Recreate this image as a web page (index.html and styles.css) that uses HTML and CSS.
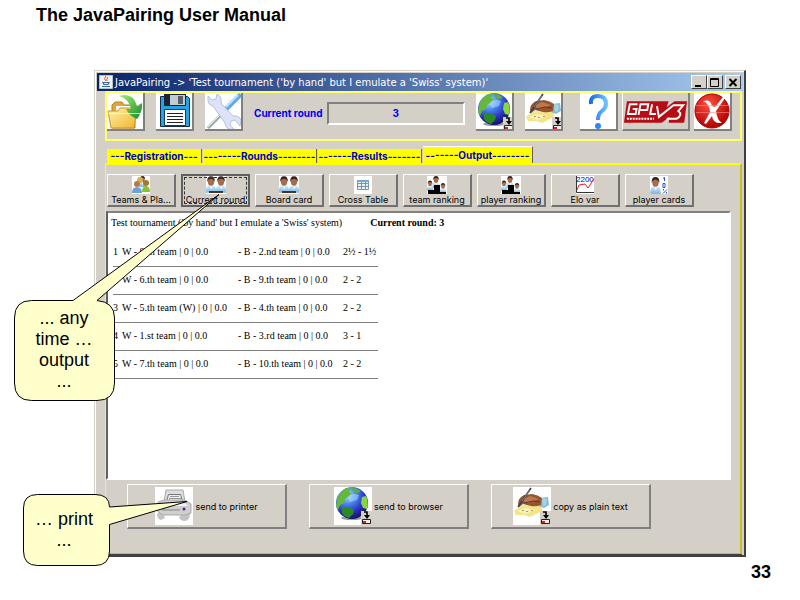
FILE: index.html
```html
<!DOCTYPE html>
<html lang="en">
<head>
<meta charset="utf-8">
<title>The JavaPairing User Manual</title>
<link rel="stylesheet" href="styles.css">
</head>
<body>
<svg class="sprite" aria-hidden="true">
  <defs>
    <radialGradient id="sea" cx=".35" cy=".25" r=".8"><stop offset="0" stop-color="#b8e4ff"/><stop offset=".35" stop-color="#4a86ec"/><stop offset=".7" stop-color="#2a2fc0"/><stop offset="1" stop-color="#101050"/></radialGradient>
    <linearGradient id="folder" x2="1" y2="1"><stop offset="0" stop-color="#fff3b0"/><stop offset="1" stop-color="#efb52a"/></linearGradient>
    <linearGradient id="leaf" x2="1" y2="1"><stop offset="0" stop-color="#a4f070"/><stop offset="1" stop-color="#138a2c"/></linearGradient>
    <linearGradient id="query" x2="1"><stop offset="0" stop-color="#1c6cf0"/><stop offset="1" stop-color="#6cc0ff"/></linearGradient>
    <radialGradient id="stop" cx=".4" cy=".3" r=".7"><stop offset="0" stop-color="#ff5040"/><stop offset="1" stop-color="#b00000"/></radialGradient>
    <linearGradient id="shirt" x2="0" y2="1"><stop offset="0" stop-color="#d4eefc"/><stop offset="1" stop-color="#78b4e4"/></linearGradient>
  </defs>
  <symbol id="i-drive" viewBox="0 0 11 14">
    <path fill="#d4d0c8" d="M0 0h11v14H0z"/><path fill="none" stroke="#000" stroke-width="1.6" d="M3 1h3v5"/><path d="M3 4h6L6 8z"/><path fill="#eee" stroke="#222" d="M1.500 8.500h8v4h-8z"/><path fill="#e02020" d="M2 10h3v2H2z"/>
  </symbol>
  <symbol id="i-globe" viewBox="0 0 38 38">
    <path fill="#fff" d="M0 0h38v38H0z"/><ellipse cx="18" cy="31" rx="11" ry="2" fill="#9a9aa8"/><circle cx="18" cy="16" r="16" fill="url(#sea)"/>
    <path fill="#66b838" d="M3 13Q5 5 12 1l5 1-2 3 3 1-3 4-4 2-1 4-4 2-2 5-2-4z"/><path fill="#2c8a24" d="M8 21l6-1 6 3-1 4-4 4q-5-1-7-5z"/><path fill="#88d83c" d="M28 10l4-1q3 6 1 13l-4-1-2-5z"/><path fill="#5fae3c" d="M18 1q6 0 9 4l-5 1-3-2z"/><path fill="#a8dcff" opacity=".55" d="M13 10q5-5 12-2l-2 5-7 2z"/>
    <use href="#i-drive" x="27" y="24" width="11" height="14"/>
  </symbol>
  <symbol id="i-hand" viewBox="0 0 38 38">
    <path fill="#fff" d="M0 0h38v38H0z"/><path fill="#f4e488" d="M1 24l8-6 20 1 0 5-12 6-6-2-8 0z"/><path fill="#faf2c0" d="M4 24l8-3 10 2-9 4z"/><path fill="#85bdd4" d="M27 11l8-1 1 8-5 3-5-2z"/><path fill="#a4d4e4" d="M29 11l5 1-1 6-3 1z"/>
    <path fill="#955530" d="M5 17q0-6 6-9l8-1q6 1 10 4l-1 7q-5 2-10 1l-8-2-4 3z"/><path fill="#bd784c" d="M10 12l7-3 9 3-8 3-6 1z"/><path stroke="#653520" fill="none" d="M11 16l9-2 7 1"/><path stroke="#34424c" stroke-width="1.600" d="M5 20L18 1"/><path stroke="#86a2b0" stroke-width=".7" d="M9 14l8-11"/><path fill="#b0985c" d="M13 24h2v1h-2zM18 23h2v1h-2zM9 23h2v1H9z"/>
    <use href="#i-drive" x="27" y="24" width="11" height="14"/>
  </symbol>
  <symbol id="i-man" viewBox="0 0 12 20">
    <path fill="url(#shirt)" d="M0 20q-1-8 4-9h4q5 1 4 9z"/><ellipse cx="6" cy="6.500" rx="3.800" ry="5" fill="#a86c4a"/><path fill="#33241c" d="M1.500 7Q1 0 6 0t4.500 7L9 4 6 3 3 4z"/><path fill="#fff" d="M5 12l1 4 2-4z"/>
  </symbol>
  <symbol id="i-duel" viewBox="0 0 22 18">
    <path fill="#fff" d="M1 0h20v18H1z"/><use href="#i-man" x="1" y="0" width="10" height="17"/><use href="#i-man" x="11" y="0" width="10" height="17"/><path fill="#4a3428" d="M4 15h14v2H4z"/>
  </symbol>
  <symbol id="i-podium" viewBox="0 0 20 18">
    <path fill="#fff" d="M0 0h20v18H0z"/><use href="#i-man" x="5" y="0" width="8" height="12"/><use href="#i-man" x="0" y="4" width="6" height="11"/><use href="#i-man" x="13" y="7" width="6" height="10"/><path d="M7 9h6v9H1v-4h6zM13 16h6v2h-6z"/>
  </symbol>
</svg>

<header class="heading"><h1>The JavaPairing User Manual</h1></header>

<main class="window">
  <div class="titlebar">
    <svg class="cup" viewBox="0 0 14 14" aria-hidden="true"><path fill="#eef2f6" stroke="#b8c0c8" d="M.5.5h13v13H.5z"/><path fill="none" stroke="#e06018" d="M7 1q-3 3 0 5M9 2q-2 2-1 4"/><path fill="none" stroke="#386898" stroke-width="1.200" d="M4 7.500h6l-1 2H5zM3 11.500h8"/></svg>
    <span class="caption">JavaPairing -&gt; 'Test tournament ('by hand' but I emulate a 'Swiss' system)'</span>
    <div class="controls">
      <button aria-label="Minimize"><svg viewBox="0 0 12 11"><path d="M2 8h6v2H2z"/></svg></button>
      <button aria-label="Maximize"><svg viewBox="0 0 12 11"><path fill="none" stroke="#000" d="M1.500 1.500h8v8h-8zM1 2.500h9"/></svg></button>
      <button aria-label="Close"><svg viewBox="0 0 12 11"><path stroke="#000" stroke-width="2" d="M2.500 2l7 7M9.500 2l-7 7"/></svg></button>
    </div>
  </div>

  <div class="toolbar">
    <div class="group">
      <button class="tool" aria-label="Open"><svg viewBox="0 0 38 38"><path fill="#fff" d="M0 0h38v38H0z"/><path fill="#dca83c" stroke="#b88020" d="M5 12l3-3h7l2 3h11v23H5z"/><path fill="#fff" d="M9 13h17v7H9z"/><path fill="url(#folder)" stroke="#cc9428" d="M1 18h10l2-3h17l-3 20H4z"/><path fill="url(#leaf)" d="M12 3q14-4 18 10l5-3q1 8-5 16-8-3-11-10l5 0Q22 6 12 3z"/><path stroke="#fff" opacity=".7" d="M0 20.500h36"/></svg></button>
      <button class="tool" aria-label="Save"><svg viewBox="0 0 38 38"><path fill="#fff" d="M0 0h38v38H0z"/><path fill="#22a4e4" stroke="#102c48" d="M4.500 3.500h27l2 2v28h-29z"/><path fill="#1c2430" d="M8 1h22v12H8z"/><path fill="#c4ccd0" d="M14 2h15v10H14z"/><path fill="#555f68" d="M22 3h5v8h-5z"/><path fill="#fff" stroke="#203850" d="M8.500 16.500h21v16h-21z"/><path stroke="#222" d="M11 20.500h16M11 23.500h16M11 26.500h16M11 29.500h16"/></svg></button>
      <button class="tool" aria-label="Settings"><svg viewBox="0 0 38 38"><path fill="#fff" d="M0 0h38v38H0z"/><path stroke="#9ba8b0" stroke-width="3" d="M3 35l20-20"/><path stroke="#e4f0f8" d="M3 34l20-20"/><path stroke="#62a8e8" stroke-width="5" stroke-linecap="round" d="M22 15L34 3"/><path stroke="#bfe2ff" stroke-width="2" d="M21 14L33 2"/><path fill="#dde2f8" stroke="#a4b8d4" stroke-width=".8" d="M3 3l4 4 4-1 1-5q5 2 4 9l12 13q7-1 8 5l-1 5-5-6-4 1-1 4 4 4q-8 2-9-6L8 13Q2 12 3 3z"/></svg></button>
    </div>
    <div class="round">
      <label for="round">Current round</label>
      <input id="round" type="text" value="3" readonly>
    </div>
    <div class="group">
      <button class="tool" aria-label="Browser"><svg><use href="#i-globe"/></svg></button>
      <button class="tool" aria-label="Copy"><svg><use href="#i-hand"/></svg></button>
    </div>
    <div class="group about">
      <button class="tool" aria-label="Help"><svg viewBox="0 0 38 38"><path fill="#fff" d="M0 0h38v38H0z"/><path fill="none" stroke="url(#query)" stroke-width="4" d="M11 11Q10 3 18 3q8 0 8 8 0 4-4 7-4 3-4 9"/><circle cx="18" cy="33" r="3" fill="#2a88ee"/></svg></button>
      <button class="tool wide" aria-label="License"><svg viewBox="0 0 68 38"><path fill="#b80c14" d="M4 8h43l-2 6 8-6h13l-3 22H47l1-6-8 6H1z"/><path fill="none" stroke="#fff" stroke-width="2" d="M15 11H7L5 21h8l1-5h-4M16 22l2-11h8l-1 6h-7M30 11l-2 10h6"/><path fill="none" stroke="#fff" stroke-width="2" d="M35 13l2 11 15-12h10l-5 6q5 4-2 8H45"/><path stroke="#fff" stroke-width="2" stroke-dasharray="2 1" d="M4 26h28"/></svg></button>
      <button class="tool" aria-label="Exit"><svg viewBox="0 0 38 38"><path fill="#fff" d="M0 0h38v38H0z"/><circle cx="18" cy="18" r="17" fill="url(#stop)" stroke="#a00"/><path fill="#fff" d="M10 8q6-2 8 5l3 1 8-10 2 1-9 13q1 9 6 12-9 1-10-7l-6 8-2-1 6-11q0-8-7-11z"/><path stroke="#f88" opacity=".6" d="M2 12.500h34M2 19.500h34"/></svg></button>
    </div>
  </div>

  <nav class="tabs" role="tablist">
    <button role="tab">---Registration---</button>
    <button role="tab">--------Rounds--------</button>
    <button role="tab">-------Results-------</button>
    <button role="tab" aria-selected="true" class="current">-------Output--------</button>
  </nav>

  <section class="panel">
    <div class="views">
      <button><svg viewBox="0 0 22 18"><path fill="#fff" d="M2 0h18v18H2z"/><use href="#i-man" x="9" y="0" width="7" height="11"/><circle cx="10" cy="4" r="3" fill="#dcb050"/><circle cx="16" cy="7" r="3" fill="#a47830"/><path fill="#8cc030" d="M12 16q0-6 4-6t4 6z"/><circle cx="7" cy="8" r="3" fill="#b87848"/><path fill="#68a4dc" d="M2 17q0-6 5-6t5 6z"/></svg>Teams &amp; Pla...</button>
      <button class="focused"><svg viewBox="0 0 22 18"><use href="#i-duel"/></svg>Current round</button>
      <button><svg viewBox="0 0 22 18"><use href="#i-duel"/></svg>Board card</button>
      <button><svg viewBox="0 0 22 18"><path fill="#fff" d="M2 0h18v18H2z"/><path fill="#e4f4f4" stroke="#8094a8" d="M5.500 4.500h11v9h-11zM5 7.500h12M5 10.500h12M9.500 4v10M13.500 4v10"/><path fill="#70a8d8" d="M5 4h12v2H5z"/></svg>Cross Table</button>
      <button><svg viewBox="0 0 20 18"><use href="#i-podium"/></svg>team ranking</button>
      <button><svg viewBox="0 0 20 18"><use href="#i-podium"/></svg>player ranking</button>
      <button><svg viewBox="0 0 22 18"><path fill="#fff" d="M2 0h18v18H2z"/><path fill="none" stroke="#333" d="M2.500 0v16.500H20"/><text class="elo" x="2" y="6">2200</text><path fill="none" stroke="#e02030" d="M3 14l2-5 6-1 3 4 6-9"/></svg>Elo var</button>
      <button><svg viewBox="0 0 22 18"><path fill="#fff" d="M2 0h18v18H2z"/><use href="#i-man" x="2" y="1" width="11" height="17"/><path fill="none" stroke="#2058d8" d="M15 2.500l1.500-1V5M15 7.500h2v4h-2zM15 17.500l4-4M15.500 13v1.500M18.500 16v1.500"/></svg>player cards</button>
    </div>

    <div class="sheet">
      <p>Test tournament ('by hand' but I emulate a 'Swiss' system)<b>Current round: 3</b></p>
      <table>
        <colgroup><col class="c-no"><col class="c-white"><col class="c-black"><col class="c-score"></colgroup>
        <tbody>
          <tr><td>1</td><td>W - 8.th team | 0 | 0.0</td><td>- B - 2.nd team | 0 | 0.0</td><td>2½ - 1½</td></tr>
          <tr><td>2</td><td>W - 6.th team | 0 | 0.0</td><td>- B - 9.th team | 0 | 0.0</td><td>2 - 2</td></tr>
          <tr><td>3</td><td>W - 5.th team (W) | 0 | 0.0</td><td>- B - 4.th team | 0 | 0.0</td><td>2 - 2</td></tr>
          <tr><td>4</td><td>W - 1.st team | 0 | 0.0</td><td>- B - 3.rd team | 0 | 0.0</td><td>3 - 1</td></tr>
          <tr><td>5</td><td>W - 7.th team | 0 | 0.0</td><td>- B - 10.th team | 0 | 0.0</td><td>2 - 2</td></tr>
        </tbody>
      </table>
    </div>

    <div class="actions">
      <button><svg viewBox="0 0 38 38"><path fill="#fff" d="M0 0h38v38H0z"/><path fill="#c4c4c4" d="M2 27l5-3 3 7-4 2q-4-1-4-6zM24 30l6-5 5 2q0 6-5 7-5 0-6-4z"/><path fill="#ddd" stroke="#aaa" d="M11 3h17l2 12H9z"/><path fill="#eee" stroke="#777" d="M13.500 7.500h12l2 7h-16z"/><path stroke="#999" d="M15 9.500h9M14 11.500h12"/><path fill="#d0d0d0" stroke="#aaa" d="M3 15l6-2h21l6 4v9l-6 2H8l-5-3z"/><path fill="#f2f2f2" d="M6 16h24l3 3H5z"/><path fill="#aaa" d="M7 22h18v2H7z"/><circle cx="29" cy="22" r="1.500" fill="#528"/></svg>send to printer</button>
      <button><svg viewBox="0 0 38 38"><use href="#i-globe"/></svg>send to browser</button>
      <button><svg viewBox="0 0 38 38"><use href="#i-hand"/></svg>copy as plain text</button>
    </div>
  </section>
</main>

<footer class="page-number">33</footer>

<aside class="callout any">
  <svg viewBox="0 0 208 210" aria-hidden="true"><path d="M18.500 107.500H60L206 1.500 84 107.500Q101.500 109 101.500 125V190Q101.500 207.500 84 207.500H18.500Q1.500 207.500 1.500 190V125Q1.500 107.500 18.500 107.500z"/></svg>
  <p>... any<br>time …<br>output<br>...</p>
</aside>
<aside class="callout print">
  <svg viewBox="0 0 166 74" aria-hidden="true"><path d="M15.500 1.500H73Q87.500 1.500 87.500 14L165 8.500 87.500 31.500V58Q87.500 72.500 73 72.500H15.500Q1.500 72.500 1.500 58V15Q1.500 1.500 15.500 1.500z"/></svg>
  <p>… print<br>...</p>
</aside>
</body>
</html>
```
FILE: styles.css
```css
* { box-sizing: border-box; }
body { margin: 0; background: #fff; color: #000; font-family: "DejaVu Sans", sans-serif; position: relative; }
button { margin: 0; padding: 0; font: inherit; color: inherit; background: #d4d0c8; }
svg { display: block; }
.sprite { position: absolute; width: 0; height: 0; }

.heading { padding: 4px 36px 0; height: 70px; }
.heading h1 { margin: 0; font: bold 18px/22px "Liberation Sans", sans-serif; }

.window { margin: 0 54px 0 94px; padding: 2px 1px 1px 2px; background: #d4d0c8; border: 1px solid #d4d0c8; border-width: 1px 2px 2px 1px; border-right-color: #404040; border-bottom-color: #404040; box-shadow: inset 1px 1px #fff; }
.titlebar { display: flex; align-items: center; height: 18px; padding: 0 2px; gap: 2px; color: #fff; font-size: 10px; background: linear-gradient(90deg, #0a246a, #a6caf0); white-space: nowrap; }
.cup { width: 14px; height: 14px; }
.caption { flex: 1; }
.controls { display: flex; }
.controls button { width: 16px; height: 14px; border: 1px solid; border-color: #fff #404040 #404040 #fff; color: #000; }
.controls button:last-child { margin-left: 2px; }
.controls svg { width: 12px; height: 11px; margin: 0 1px; }

.toolbar { display: flex; align-items: flex-start; gap: 11px; height: 50px; margin: 0 1px 0 8px; border: 2px solid #ffff66; padding-right: 8px; }
.group { display: flex; flex: none; gap: 11px; }
.about { gap: 4px; margin-left: 6px; }
.tool { flex: none; width: 38px; height: 38px; border: 1px solid #fff; border-width: 0 2px 2px 0; border-color: #fff #808080 #808080 #fff; overflow: hidden; }
.tool svg { width: 38px; height: 38px; }
.tool.wide { width: 68px; border-left-width: 1px; }
.tool.wide svg { width: 66px; }
.round { flex: 1; min-width: 0; display: flex; align-items: center; gap: 4px; height: 40px; color: #0000f0; font: bold 10px Inter, sans-serif; white-space: nowrap; }
.round input { flex: 1; width: 0; min-width: 0; height: 23px; border: 2px solid; border-color: #808080 #fff #fff #808080; background: #d4d0c8; color: inherit; font: inherit; text-align: center; padding: 0; }

.tabs { display: grid; grid-template-columns: 95px 114px 104px 110px; align-items: end; gap: 1px; height: 22px; margin-left: 10px; }
.tabs button { height: 14px; padding: 0; border: 0; border-right: 1px solid #606060; background: #ff0; color: #0000c8; font: bold 10px/14px Inter, sans-serif; white-space: nowrap; }
.tabs .current { height: 17px; border-top: 1px solid #fff; }

.panel { margin: 0 1px 0 8px; padding: 9px 9px 24px 0; border: 2px solid #ff0; border-width: 2px 2px 1px 1px; border-right-color: #c8c020; border-bottom-color: #c8c020; box-shadow: 0 1px #404040; }
.views { display: flex; gap: 5px; padding-left: 1px; font: 9px Inter, sans-serif; }
.views button { width: 69px; height: 33px; border: 1px solid; border-width: 1px 2px 2px 1px; border-color: #fff #707070 #707070 #fff; line-height: 11px; white-space: nowrap; }
.views svg { width: 22px; height: 18px; margin: 0 auto; }
.views .focused { border-color: #606060; border-width: 2px; outline: 1px dashed #333; outline-offset: -4px; }
.elo { font: 8px "Liberation Sans", sans-serif; fill: #0000d0; }

.sheet { min-height: 269px; margin-top: 4px; padding: 3px; background: #fff; border: 2px solid; border-color: #808080 #fff #fff #606060; font: 10px/14px "Liberation Serif", serif; white-space: nowrap; }
.sheet p { margin: 0 0 8px; }
.sheet b { margin-left: 28px; }
.sheet table { margin-left: 2px; border-collapse: collapse; table-layout: fixed; width: 265px; }
.c-no { width: 9px; }
.c-white { width: 116px; }
.c-black { width: 105px; }
.c-score { width: 35px; }
.sheet td { height: 28px; padding: 0; border-bottom: 1px solid #808080; }

.actions { display: flex; gap: 22px; padding: 4px 0 0 21px; font: 9px Inter, sans-serif; }
.actions button { display: flex; align-items: center; justify-content: center; gap: 2px; width: 160px; height: 45px; border: 1px solid; border-width: 1px 2px 2px 1px; border-color: #fff #808080 #808080 #fff; }
.actions svg { width: 38px; height: 38px; }

.page-number { padding: 4px 29px 0; text-align: right; font: bold 18px/22px "Liberation Sans", sans-serif; }

.callout { position: absolute; font: 18px/21px "Liberation Sans", sans-serif; text-align: center; pointer-events: none; }
.callout path { fill: #ffffcc; stroke: #000; }
.callout p { position: absolute; margin: 0; }
.any { left: 13px; top: 193px; width: 208px; }
.any p { left: 0; top: 115px; width: 102px; }
.print { left: 22px; top: 493px; width: 166px; }
.print p { left: 0; top: 16px; width: 84px; }
```
